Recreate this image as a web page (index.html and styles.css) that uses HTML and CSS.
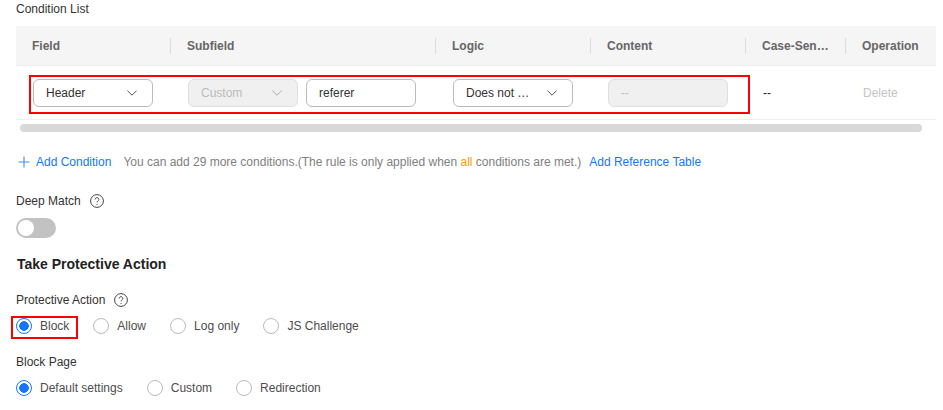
FILE: index.html
```html
<!DOCTYPE html>
<html lang="en">
<head>
<meta charset="utf-8">
<title>Condition List</title>
<link rel="stylesheet" href="styles.css">
</head>
<body>
<main class="page">
  <div class="list-title">Condition List</div>
  <div class="table">
    <div class="row head">
      <div class="cell"><span>Field</span></div>
      <div class="cell"><span>Subfield</span></div>
      <div class="cell"><span>Logic</span></div>
      <div class="cell"><span>Content</span></div>
      <div class="cell"><span>Case-Sen…</span></div>
      <div class="cell last"><span>Operation</span></div>
    </div>
    <div class="row body">
      <div class="cell">
        <div class="ctl w120"><span class="val">Header</span>
          <svg class="chev" viewBox="0 0 10 6"><path d="M.4.6 5 5.2 9.6.6"/></svg></div>
      </div>
      <div class="cell pair">
        <div class="ctl w110 off"><span class="val">Custom</span>
          <svg class="chev" viewBox="0 0 10 6"><path d="M.4.6 5 5.2 9.6.6"/></svg></div>
        <div class="ctl w110"><span class="val">referer</span></div>
      </div>
      <div class="cell">
        <div class="ctl w120"><span class="val">Does not …</span>
          <svg class="chev" viewBox="0 0 10 6"><path d="M.4.6 5 5.2 9.6.6"/></svg></div>
      </div>
      <div class="cell">
        <div class="ctl w120 off"><span class="val">--</span></div>
      </div>
      <div class="cell"><span class="dash">--</span></div>
      <div class="cell"><span class="del">Delete</span></div>
      <div class="mark mark-row"></div>
    </div>
    <div class="scroll"><div class="thumb"></div></div>
  </div>

  <div class="add-line">
    <a class="link add"><svg class="plus" viewBox="0 0 12 12"><path d="M6 .5v11M.5 6h11"/></svg>Add Condition</a>
    <span class="hint">You can add 29 more conditions.(The rule is only applied when <b class="all">all</b> conditions are met.)</span>
    <a class="link">Add Reference Table</a>
  </div>

  <div class="label deep">Deep Match
    <svg class="help" viewBox="0 0 14 14"><circle cx="7" cy="7" r="6.4"/><path d="M5.2 5.4a1.8 1.8 0 1 1 2.7 1.6c-.6.3-.9.7-.9 1.4"/><path class="dot" d="M7 10v.9"/></svg>
  </div>
  <div class="switch"><i></i></div>

  <h2 class="section">Take Protective Action</h2>

  <div class="label prot">Protective Action
    <svg class="help" viewBox="0 0 14 14"><circle cx="7" cy="7" r="6.4"/><path d="M5.2 5.4a1.8 1.8 0 1 1 2.7 1.6c-.6.3-.9.7-.9 1.4"/><path class="dot" d="M7 10v.9"/></svg>
  </div>
  <div class="radios first">
    <label class="radio on"><i></i>Block<span class="mark mark-block"></span></label>
    <label class="radio"><i></i>Allow</label>
    <label class="radio"><i></i>Log only</label>
    <label class="radio"><i></i>JS Challenge</label>
  </div>

  <div class="label bpage">Block Page</div>
  <div class="radios second">
    <label class="radio on"><i></i>Default settings</label>
    <label class="radio"><i></i>Custom</label>
    <label class="radio"><i></i>Redirection</label>
  </div>
</main>
</body>
</html>
```
FILE: styles.css
```css
* { box-sizing: border-box; }
html, body { margin: 0; height: 100%; overflow: hidden; background: #fff; }
body { font: 12px/16px "Liberation Sans", Arial, sans-serif; color: #333; }
.page { padding-left: 16px; width: 943px; }

.list-title { height: 26px; padding-top: 1px; color: #333; }

.table { width: 920px; }
.row { display: grid; grid-template-columns: 155px 265px 155px 155px 100px 90px; }
.head { height: 40px; background: #f5f5f5; border-bottom: 1px solid #eee; color: #666; font-weight: 700; align-items: center; }
.head .cell { height: 16px; padding-left: 16px; border-right: 1px solid #ddd; line-height: 16px; }
.head .cell.last { border-right: 0; }
.body { position: relative; height: 54px; border-bottom: 1px solid #eee; align-items: center; }
.body .cell { padding-left: 17px; }
.body .cell.pair { display: flex; gap: 8px; }

.ctl { display: flex; align-items: center; justify-content: space-between; height: 28px; padding: 0 15px 0 12px; border: 1px solid #bbb; border-radius: 6px; background: #fff; color: #333; }
.w120 { width: 120px; }
.w110 { width: 110px; }
.ctl.off { background: #f0f0f0; border-color: #dfdfdf; color: #bbb; }
.chev { width: 10px; height: 6px; flex: none; fill: none; stroke: #555; stroke-width: 1; }
.off .chev { stroke: #aaa; }
.dash { color: #222; }
.del { color: #c4c4c4; }

.mark { position: absolute; border: 2px solid #f00; }
.mark-row { left: 13px; top: 9px; width: 721px; height: 39px; }

.scroll { height: 13px; padding: 4px 14px 0 4px; }
.thumb { height: 8px; border-radius: 4px; background: #d9d9d9; }

.add-line { display: flex; align-items: center; height: 16px; margin-top: 21px; }
.link { color: #1476ff; }
.add { display: inline-flex; align-items: center; }
.plus { width: 12px; height: 12px; margin: 0 6px 0 2px; fill: none; stroke: #3d8bff; stroke-width: 1.1; }
.hint { margin: 0 8px 0 12px; color: #808080; }
.all { font-weight: 400; color: #f90; }

.label { display: flex; align-items: center; height: 16px; color: #333; }
.help { width: 14px; height: 14px; margin-left: 9px; fill: none; stroke: #444; stroke-width: 1; }
.deep { margin-top: 23px; }
.switch { width: 40px; height: 20px; margin-top: 9px; padding: 2px; border-radius: 10px; background: #c2c2c2; }
.switch i { display: block; width: 16px; height: 16px; border-radius: 50%; background: #fff; }

.section { margin: 18px 0 0; padding-left: 1px; height: 16px; font-size: 14px; line-height: 16px; font-weight: 700; color: #222; }

.prot { margin-top: 20px; }
.radios { display: flex; align-items: center; height: 16px; color: #4d4d4d; }
.first { margin-top: 10px; gap: 24px; }
.second { margin-top: 10px; gap: 24px; }
.bpage { margin-top: 20px; }
.radio { position: relative; display: flex; align-items: center; white-space: nowrap; }
.radio i { width: 16px; height: 16px; margin-right: 8px; border: 1px solid #bbb; border-radius: 50%; background: #fff; }
.radio.on i { border-color: #1476ff; background: radial-gradient(circle, #1476ff 0 4.5px, #fff 5px); }
.mark-block { left: -5px; top: -2px; width: 67px; height: 23px; }
```
